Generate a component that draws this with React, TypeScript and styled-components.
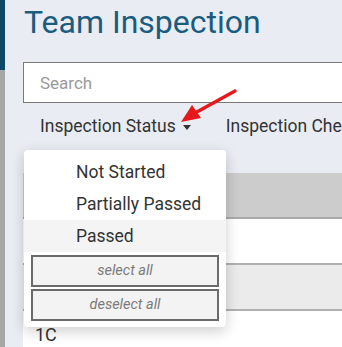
import React, { useState } from "react";
import styled, { createGlobalStyle } from "styled-components";

const GlobalStyle = createGlobalStyle`
	html, body {
		margin: 0;
		padding: 0;
		background: #e9edf3;
		font-family: Roboto, "Liberation Sans", Arial, sans-serif;
		overflow: hidden;
	}
	* {
		box-sizing: border-box;
	}
`;

const statusOptions = ["Not Started", "Partially Passed", "Passed"];

export default function App() {
	const [active] = useState("Passed");

	return (
		<>
			<GlobalStyle />
			<Page>
				<Sidebar>
					<SidebarTop />
				</Sidebar>
				<Main>
					<Title>Team Inspection</Title>
					<SearchInput placeholder="Search" />
					<FilterRow>
						<FilterButton>
							Inspection Status
							<Caret />
						</FilterButton>
						<FilterButton>Inspection Checklist</FilterButton>
						<Dropdown>
							<OptionList>
								{statusOptions.map((option) => (
									<Option key={option} active={option === active}>
										{option}
									</Option>
								))}
							</OptionList>
							<ActionButton>select all</ActionButton>
							<ActionButton>deselect all</ActionButton>
						</Dropdown>
					</FilterRow>
					<Table>
						<HeaderRow />
						<Row />
						<Row striped />
						<Row>
							<Cell>1C</Cell>
						</Row>
					</Table>
				</Main>
				<Arrow width="80" height="50" viewBox="0 0 80 50">
					<line x1="72" y1="5" x2="32" y2="27" stroke="#e5181c" strokeWidth="3.4" strokeLinecap="round" />
					<polygon points="18,36 29,19 38,32" fill="#e5181c" />
				</Arrow>
			</Page>
		</>
	);
}

const Page = styled.div`
	position: relative;
	display: flex;
	width: 342px;
	height: 347px;
	overflow: hidden;
`;

const Sidebar = styled.div`
	flex: 0 0 5px;
	background: #a7a7a7;
`;

const SidebarTop = styled.div`
	height: 70px;
	background: #0e4a68;
`;

const Main = styled.div`
	flex: 1;
	padding-left: 18px;
	min-width: 0;
`;

const Title = styled.h1`
	margin: 0;
	padding: 3px 0 0 1px;
	height: 62px;
	font-size: 32px;
	font-weight: 400;
	color: #1a5c80;
	line-height: 38px;
	white-space: nowrap;
`;

const SearchInput = styled.input`
	display: block;
	width: 420px;
	height: 41px;
	border: 1px solid #7a7a7a;
	background: #fff;
	padding: 0 16px;
	font-family: inherit;
	font-size: 17px;
	color: #333;
	outline: none;
	&::placeholder {
		color: #9a9a9a;
	}
`;

const FilterRow = styled.div`
	position: relative;
	display: flex;
	gap: 35px;
	height: 70px;
	padding: 13px 0 0 17px;
	white-space: nowrap;
`;

const FilterButton = styled.div`
	display: flex;
	align-items: center;
	height: 20px;
	font-size: 17.5px;
	color: #333;
`;

const Caret = styled.span`
	margin-left: 7px;
	margin-top: 3px;
	width: 0;
	height: 0;
	border-left: 4.5px solid transparent;
	border-right: 4.5px solid transparent;
	border-top: 5px solid #333;
`;

const Dropdown = styled.div`
	position: absolute;
	top: 47px;
	left: 1px;
	width: 202px;
	z-index: 2;
	background: #fff;
	border-radius: 4px;
	box-shadow: 0 4px 14px rgba(0, 0, 0, 0.2);
	padding: 6px 0 6px;
	white-space: normal;
`;

const OptionList = styled.div`
	display: flex;
	flex-direction: column;
`;

const Option = styled.div<{ active?: boolean }>`
	height: 32px;
	line-height: 32px;
	padding-left: 52px;
	font-size: 17.5px;
	color: #333;
	background: ${(p) => (p.active ? "#f4f4f4" : "transparent")};
`;

const ActionButton = styled.div`
	margin: 3px 7px 0;
	height: 32px;
	line-height: 28px;
	border: 2px solid #6a6a6a;
	background: #f3f3f3;
	text-align: center;
	font-size: 14.5px;
	font-style: italic;
	color: #7a7a7a;
	& + & {
		margin-top: 2px;
	}
`;

const Table = styled.div`
	width: 420px;
`;

const HeaderRow = styled.div`
	height: 46px;
	background: #cccccc;
	border-bottom: 2px solid #a9a9a9;
`;

const Row = styled.div<{ striped?: boolean }>`
	height: 46px;
	background: ${(p) => (p.striped ? "#ebebeb" : "#fff")};
	border-bottom: 2px solid #b0b0b0;
	&:last-child {
		border-bottom: none;
	}
`;

const Cell = styled.div`
	padding: 13px 0 0 12px;
	font-size: 18px;
	color: #333;
`;

const Arrow = styled.svg`
	position: absolute;
	left: 163px;
	top: 86px;
	z-index: 3;
`;
